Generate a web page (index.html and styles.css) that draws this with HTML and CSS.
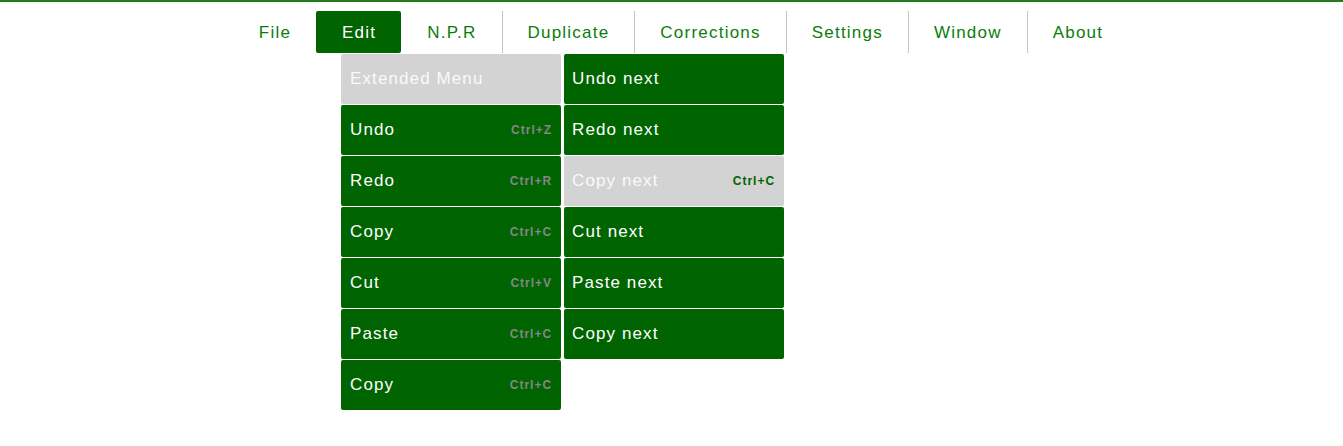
FILE: index.html
```html
<!DOCTYPE html>
<html>
<head>
<meta charset="utf-8">
<link rel="stylesheet" href="styles.css">
</head>
<body>
<nav class="menubar">
  <ul class="menu">
    <li class="item">File</li>
    <li class="item active no-sep">Edit
      <div class="dropdown">
        <ul class="col">
          <li class="entry light">Extended Menu</li>
          <li class="entry"><span>Undo</span><span class="key">Ctrl+Z</span></li>
          <li class="entry"><span>Redo</span><span class="key">Ctrl+R</span></li>
          <li class="entry"><span>Copy</span><span class="key">Ctrl+C</span></li>
          <li class="entry"><span>Cut</span><span class="key">Ctrl+V</span></li>
          <li class="entry"><span>Paste</span><span class="key">Ctrl+C</span></li>
          <li class="entry"><span>Copy</span><span class="key">Ctrl+C</span></li>
        </ul>
        <ul class="col">
          <li class="entry"><span>Undo next</span></li>
          <li class="entry"><span>Redo next</span></li>
          <li class="entry light"><span>Copy next</span><span class="key">Ctrl+C</span></li>
          <li class="entry"><span>Cut next</span></li>
          <li class="entry"><span>Paste next</span></li>
          <li class="entry"><span>Copy next</span></li>
        </ul>
      </div>
    </li>
    <li class="item no-sep">N.P.R</li>
    <li class="item">Duplicate</li>
    <li class="item">Corrections</li>
    <li class="item">Settings</li>
    <li class="item">Window</li>
    <li class="item">About</li>
  </ul>
</nav>
</body>
</html>
```
FILE: styles.css
```css
html, body {
  margin: 0;
  padding: 0;
  background: #ffffff;
}
body {
  border-top: 2px solid #237b1b;
  font-family: "Liberation Sans", Arial, sans-serif;
  min-height: 444px;
}
.menubar {
  padding-top: 9px;
}
.menu {
  list-style: none;
  margin: 0;
  padding: 0 0 0 18px;
  display: flex;
  justify-content: center;
}
.item {
  position: relative;
  height: 42px;
  box-sizing: border-box;
  display: flex;
  align-items: center;
  padding: 2px 25px 0;
  font-size: 17px;
  letter-spacing: 1.22px;
  color: #0b7d0b;
  border-left: 1px solid #c9c0c0;
}
.item:first-child,
.item.no-sep {
  border-left-color: transparent;
}
.item.active {
  background: #006400;
  color: #ffffff;
  border-radius: 2px;
}
.dropdown {
  position: absolute;
  top: 43px;
  left: 24px;
  display: flex;
  gap: 3px;
  align-items: flex-start;
}
.col {
  list-style: none;
  margin: 0;
  padding: 0;
  width: 220px;
  display: flex;
  flex-direction: column;
  gap: 1px;
}
.col + .col .entry {
  padding-left: 8px;
}
.entry {
  height: 50px;
  box-sizing: border-box;
  padding: 0 9px;
  display: flex;
  align-items: center;
  justify-content: space-between;
  background: #006400;
  color: #ffffff;
  border-radius: 2px;
  font-size: 17px;
  letter-spacing: 1.1px;
}
.entry.light {
  background: #d3d3d3;
  color: #fafafa;
}
.key {
  font-size: 12px;
  font-weight: bold;
  letter-spacing: 1px;
  color: #868686;
}
.entry.light .key {
  color: #006400;
}
```
